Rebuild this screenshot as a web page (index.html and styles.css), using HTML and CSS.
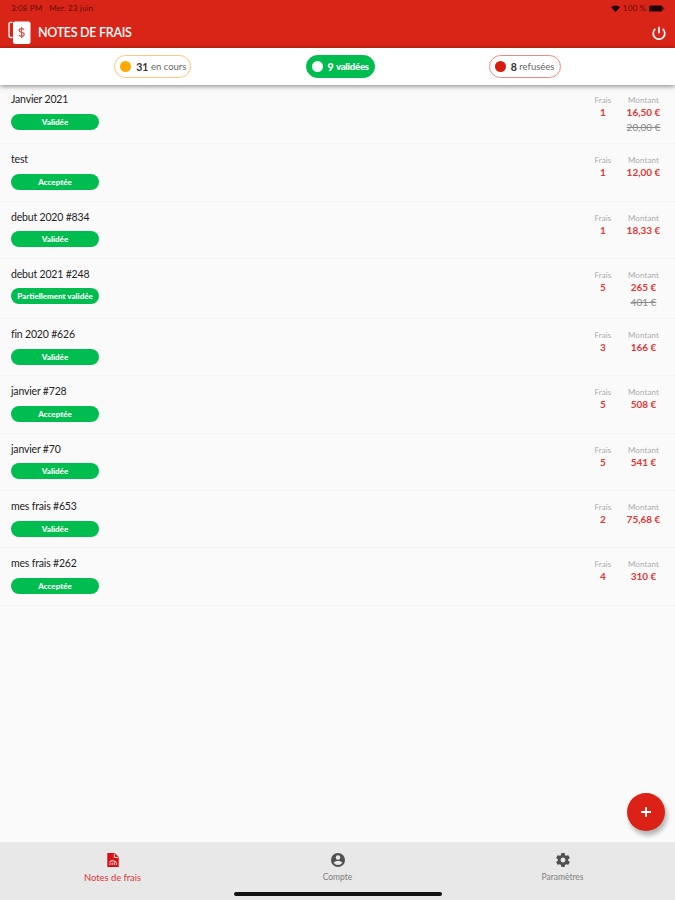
FILE: index.html
```html
<!DOCTYPE html>
<html lang="fr">
<head>
  <meta charset="UTF-8">
  <title>Notes de frais</title>
  <link rel="stylesheet" href="styles.css">
</head>
<body>
<header class="entete">
  <div class="statut">
    <span>3:08 PM</span>
    <span class="date">Mer. 23 juin</span>
    <span class="statut-droite">
      <svg width="9" height="7" viewBox="0 0 18 14"><path d="M0 4.5a13 13 0 0 1 18 0L9 14z"/></svg>
      <span class="charge">100 %</span>
      <svg width="16" height="7" viewBox="0 0 16 7"><rect y="0.5" width="13.5" height="6" rx="1.5"/><rect x="14.2" y="2.5" width="1" height="2"/></svg>
    </span>
  </div>
  <div class="titre">
    <svg class="logo" width="24" height="24" viewBox="0 0 24 24">
      <path d="M4.5 1.3H2.7Q1 1.3 1 3v11.5Q1 16.5 3 16.5h1.5" fill="none" stroke="#fff" stroke-width="1.3"/>
      <rect x="5" y="0.5" width="17.5" height="22.5" rx="2" fill="#fff"/>
      <path d="M16 8.800q-.5-1.200-2.500-1.200-2.300 0-2.300 1.700t2.400 2.100q2.600.5 2.600 2.200t-2.600 1.800q-2.200 0-2.600-1.500M13.600 6V17" fill="none" stroke="#dd5048" stroke-width="1.2"/>
    </svg>
    <h1>NOTES DE FRAIS</h1>
    <svg class="quitter" width="16" height="16" viewBox="0 0 16 16">
      <path d="M4.300 3.900a5.800 5.800 0 1 0 7.400 0M8 1.800v6.500" fill="none" stroke="#fff" stroke-width="1.7"/>
    </svg>
  </div>
</header>

<div class="filtres">
  <div class="filtre encours"><i></i><b>31</b> en cours</div>
  <div class="filtre validees"><i></i><b>9</b> validées</div>
  <div class="filtre refusees"><i></i><b>8</b> refusées</div>
</div>

<main id="liste"></main>

<button class="ajouter">
  <svg width="12" height="12" viewBox="0 0 12 12"><path d="M6 1v10M1 6h10" stroke="#fff" stroke-width="1.8"/></svg>
</button>

<nav class="onglets">
  <div class="onglet actif">
    <svg width="16" height="16" viewBox="0 0 16 16">
      <path d="M2.300 1h7.500l3.900 4v10H2.300z" fill="#d90f10"/>
      <path d="M9.300 1.700v3.700h3.800" fill="none" stroke="#e8e8e8" stroke-width="1"/>
      <path d="M4.500 10.500Q6 8 8 8.800t3.500 1.700M5 13v-1.800M7.200 13v-2.500M9.300 13v-2.500M11.300 13v-1.800" fill="none" stroke="#f5d0d0" stroke-width="1.100"/>
    </svg>
    <span>Notes de frais</span>
  </div>
  <div class="onglet">
    <svg width="16" height="16" viewBox="0 0 16 16">
      <circle cx="8" cy="8" r="7" fill="#505050"/>
      <circle cx="8" cy="5.500" r="2.300" fill="#e8e8e8"/>
      <path d="M3.600 10.500q2-1.700 4.400-1.700t4.400 1.700q-1.500 2.500-4.400 2.500t-4.400-2.500z" fill="#e8e8e8"/>
    </svg>
    <span>Compte</span>
  </div>
  <div class="onglet">
    <svg width="16" height="16" viewBox="0.500 0.500 23 23">
      <path fill="#505050" d="M19.430 12.980c.04-.32.070-.64.070-.98s-.03-.66-.07-.98l2.110-1.650c.19-.15.240-.42.120-.64l-2-3.460c-.12-.22-.39-.3-.61-.22l-2.490 1c-.52-.4-1.080-.73-1.690-.98l-.38-2.650C14.460 2.180 14.250 2 14 2h-4c-.25 0-.46.180-.49.420l-.38 2.650c-.61.250-1.170.590-1.690.980l-2.490-1c-.23-.09-.49 0-.61.220l-2 3.460c-.13.220-.07.490.120.640l2.110 1.650c-.04.320-.07.650-.07.980s.03.660.070.980l-2.110 1.650c-.19.150-.24.420-.12.640l2 3.460c.12.220.390.300.610.220l2.490-1c.52.400 1.080.730 1.690.980l.38 2.650c.03.240.240.420.490.420h4c.25 0 .46-.18.490-.42l.38-2.650c.61-.25 1.170-.59 1.690-.98l2.490 1c.23.090.490 0 .61-.22l2-3.460c.12-.22.070-.49-.12-.64l-2.110-1.650zM12 15.500c-1.930 0-3.500-1.570-3.500-3.500s1.570-3.500 3.500-3.500 3.500 1.570 3.500 3.500-1.570 3.500-3.500 3.500z"/>
    </svg>
    <span>Paramètres</span>
  </div>
  <div class="barre"></div>
</nav>

<script>
  const notes = [
    { nom: 'Janvier 2021', etat: 'Validée', frais: 1, montant: '16,50 €', ancien: '20,00 €' },
    { nom: 'test', etat: 'Acceptée', frais: 1, montant: '12,00 €' },
    { nom: 'debut 2020 #834', etat: 'Validée', frais: 1, montant: '18,33 €' },
    { nom: 'debut 2021 #248', etat: 'Partiellement validée', frais: 5, montant: '265 €', ancien: '401 €' },
    { nom: 'fin 2020 #626', etat: 'Validée', frais: 3, montant: '166 €' },
    { nom: 'janvier #728', etat: 'Acceptée', frais: 5, montant: '508 €' },
    { nom: 'janvier #70', etat: 'Validée', frais: 5, montant: '541 €' },
    { nom: 'mes frais #653', etat: 'Validée', frais: 2, montant: '75,68 €' },
    { nom: 'mes frais #262', etat: 'Acceptée', frais: 4, montant: '310 €' }
  ];

  document.getElementById('liste').innerHTML = notes.map(n => `
    <div class="note ${n.ancien ? 'haute' : ''}">
      <div class="infos">
        <div class="nom">${n.nom}</div>
        <div class="etat">${n.etat}</div>
      </div>
      <div class="colonne frais"><small>Frais</small><b>${n.frais}</b></div>
      <div class="colonne montant"><small>Montant</small><b>${n.montant}</b>${n.ancien ? `<s>${n.ancien}</s>` : ''}</div>
    </div>
  `).join('');
</script>
</body>
</html>
```
FILE: styles.css
```css
* {
  box-sizing: border-box;
}
body {
  margin: 0;
  height: 900px;
  display: flex;
  flex-direction: column;
  overflow: hidden;
  background: #fafafa;
  color: #222;
  font-family: Lato, sans-serif;
}
svg {
  display: block;
}

.entete {
  height: 48px;
  background: #d92518;
}
.statut {
  display: flex;
  align-items: center;
  height: 16px;
  padding: 0 10px 0 11px;
  font-size: 8px;
  letter-spacing: 0.15px;
  color: #5c0d08;
}
.date {
  margin-left: 7px;
}
.statut-droite {
  display: flex;
  align-items: center;
  margin-left: auto;
}
.statut-droite svg {
  fill: #1d0403;
}
.charge {
  margin: 0 3px;
}
.titre {
  display: flex;
  align-items: center;
  height: 33px;
  padding: 0 8px;
}
.titre h1 {
  margin: 0 0 0 6px;
  font-size: 12.5px;
  font-weight: 600;
  letter-spacing: -0.3px;
  color: #fff;
}
.quitter {
  margin-left: auto;
}

.filtres {
  position: relative;
  display: flex;
  justify-content: space-evenly;
  height: 37px;
  padding-top: 7px;
  background: #fff;
  box-shadow: 0 1px 5px rgba(0, 0, 0, 0.5);
}
.filtre {
  display: flex;
  align-items: center;
  height: 23px;
  padding-left: 5px;
  border: 1px solid;
  border-radius: 12px;
  font-size: 9.5px;
  white-space: nowrap;
}
.filtre i {
  width: 11px;
  height: 11px;
  margin-right: 5px;
  border-radius: 50%;
}
.filtre b {
  margin-right: 2.5px;
  font-size: 10.5px;
  color: #333;
}
.encours {
  width: 77px;
  border-color: #fbc97a;
  color: #666;
}
.encours i {
  background: #ffa800;
}
.validees {
  width: 69px;
  border-color: #00bd4f;
  background: #00bd4f;
  color: #fff;
  font-weight: 900;
  letter-spacing: -0.2px;
}
.validees i {
  background: #fff;
}
.validees b {
  color: #fff;
}
.refusees {
  width: 72px;
  border-color: #e58b86;
  color: #666;
}
.refusees i {
  background: #d91a10;
}

#liste {
  flex: 1;
  margin-top: -1px;
}
.note {
  display: flex;
  height: 57.3px;
  padding: 8px 11px 0;
  border-bottom: 1px solid #f3f3f3;
}
.note.haute {
  height: 60.3px;
}
.infos {
  flex: 1;
}
.nom {
  height: 21.5px;
  font-size: 10.5px;
  line-height: 14px;
  letter-spacing: -0.18px;
}
.etat {
  width: 88px;
  height: 16px;
  border-radius: 8px;
  background: #00bd4f;
  color: #fff;
  font-size: 8px;
  font-weight: 900;
  line-height: 16px;
  text-align: center;
}
.colonne {
  display: flex;
  flex-direction: column;
  align-items: center;
  padding-top: 2px;
  white-space: nowrap;
}
.frais {
  width: 40px;
}
.montant {
  width: 41px;
}
.colonne small {
  font-size: 8px;
  line-height: 12px;
  letter-spacing: 0.1px;
  color: #aaa;
}
.colonne b {
  font-size: 10px;
  line-height: 12px;
  color: #dc3838;
}
.colonne s {
  margin-top: 3px;
  font-size: 10px;
  line-height: 12px;
  color: #888;
}

.ajouter {
  position: absolute;
  right: 10px;
  top: 793px;
  display: flex;
  align-items: center;
  justify-content: center;
  width: 38px;
  height: 38px;
  padding: 0;
  border: none;
  border-radius: 50%;
  background: #dc2116;
  box-shadow: 2px 4px 5px rgba(0, 0, 0, 0.3);
}

.onglets {
  position: relative;
  display: flex;
  height: 58px;
  background: #e8e8e8;
}
.onglet {
  flex: 1;
  display: flex;
  flex-direction: column;
  align-items: center;
  padding-top: 10px;
  font-size: 8.5px;
  color: #808080;
}
.onglet span {
  margin-top: 4px;
}
.actif {
  color: #dc3838;
  font-size: 9.4px;
}
/* barre d'accueil de l'iPad */
.barre {
  position: absolute;
  left: 234px;
  bottom: 4px;
  width: 208px;
  height: 4px;
  border-radius: 2px;
  background: #111;
}
```
